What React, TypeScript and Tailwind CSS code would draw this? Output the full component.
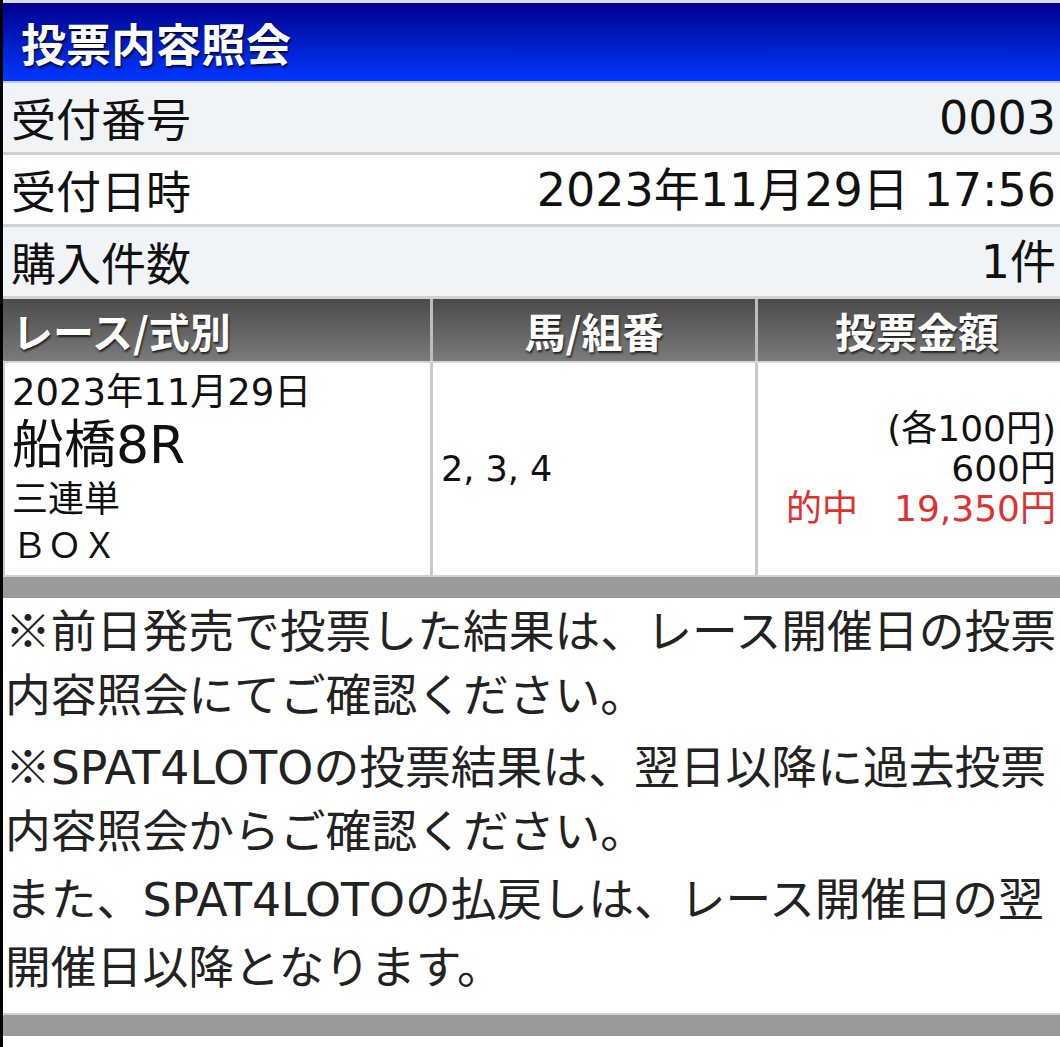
const jp = "font-['DejaVu_Sans','Noto_Sans_CJK_JP',sans-serif]";
const cjk = "font-['Noto_Sans_CJK_JP',sans-serif]";

function InfoRow({ label, value, shade }: { label: string; value: string; shade?: boolean }) {
  return (
    <div
      className={`flex h-[72px] items-center justify-between border-b-[3px] border-[#cfd1d4] pl-[8px] pr-[4px] leading-none text-[#111] ${
        shade ? "bg-[#f1f4f6]" : "bg-white"
      }`}
    >
      <span className={`${cjk} text-[45px]`}>{label}</span>
      <span className="text-[46px]">{value}</span>
    </div>
  );
}

const notes = [
  "前日発売で投票した結果は、レース開催日の投票",
  "内容照会にてご確認ください。",
  "SPAT4LOTOの投票結果は、翌日以降に過去投票",
  "内容照会からご確認ください。",
  "また、SPAT4LOTOの払戻しは、レース開催日の翌",
  "開催日以降となります。",
];

export default function App() {
  return (
    <div className={`${jp} h-[1047px] w-[1060px] overflow-hidden border-l-[3px] border-black bg-white`}>
      <div className="h-[3px] bg-[#d9dce3]" />
      <div className="flex h-[78px] items-center bg-gradient-to-b from-[#00008f] to-[#0036ff] pl-[18px]">
        <h1 className={`${cjk} text-[45px] font-bold leading-none text-white [text-shadow:1px_2px_2px_rgba(0,0,0,0.8)]`}>
          投票内容照会
        </h1>
      </div>
      <div className="h-[2px] bg-[#c9c6ee]" />

      <InfoRow label="受付番号" value="0003" shade />
      <InfoRow label="受付日時" value="2023年11月29日 17:56" />
      <InfoRow label="購入件数" value="1件" shade />

      <div
        className={`${cjk} grid h-[62px] grid-cols-[430px_325px_1fr] bg-gradient-to-b from-[#4b4b4b] to-[#7b7b7b] text-[41px] font-bold leading-none text-white [text-shadow:1px_2px_2px_rgba(0,0,0,0.7)]`}
      >
        <div className="flex items-center border-r-[3px] border-[#bdbdbd] pl-[9px]">レース/式別</div>
        <div className="flex items-center justify-center border-r-[3px] border-[#bdbdbd]">馬/組番</div>
        <div className="flex items-center justify-center pl-[16px]">投票金額</div>
      </div>
      <div className="h-[2px] bg-[#d4d4d4]" />

      <div className="grid h-[212px] grid-cols-[430px_325px_1fr] text-[#111]">
        <div className="flex flex-col border-r-[3px] border-l-[2px] border-[#c9c9c9] pl-[7px] pt-[10px]">
          <span className="text-[37px] leading-[40px]">2023年11月29日</span>
          <span className="text-[52px] leading-[64px]">船橋8R</span>
          <span className="text-[36px] leading-[46px]">三連単</span>
          <span className={`${cjk} text-[35px] leading-[40px]`}>ＢＯＸ</span>
        </div>
        <div className="flex items-center border-r-[3px] border-[#c9c9c9] pl-[8px] text-[35px]">2, 3, 4</div>
        <div className="flex flex-col items-end justify-center pr-[4px] text-[36px] leading-[40px]">
          <span>(各100円)</span>
          <span>600円</span>
          <span className="text-[#e0312f]">的中　19,350円</span>
        </div>
      </div>

      <div className="h-[23px] border-t-[2px] border-[#d2d2d2] bg-[#9a9a9a]" />

      <div className="whitespace-nowrap pl-[2px] text-[45.8px] text-[#222]">
        {notes.map((line, i) => (
          <p key={i} className="h-[68px] leading-[60px]">
            {i === 0 || i === 2 ? <span className={cjk}>※</span> : null}
            {line}
          </p>
        ))}
      </div>

      <div className="mt-[7px] h-[23px] border-t-[2px] border-[#d2d2d2] bg-[#9a9a9a]" />
    </div>
  );
}
